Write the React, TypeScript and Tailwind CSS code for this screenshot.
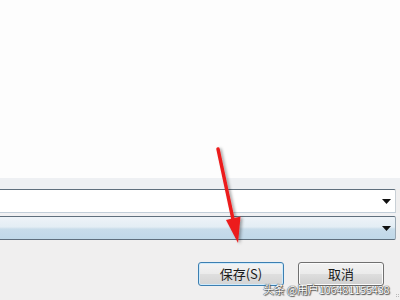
import React from "react";

const font = { fontFamily: '"Microsoft YaHei", "Noto Sans CJK SC", "Liberation Sans", sans-serif' };

function Caret() {
  return (
    <svg width="9" height="5" viewBox="0 0 9 5" className="shrink-0">
      <polygon points="0,0 9,0 4.5,5" fill="#111" />
    </svg>
  );
}

export default function App() {
  return (
    <div className="relative w-[400px] h-[300px] overflow-hidden bg-[#f0efef] flex flex-col" style={font}>
      <div className="h-[178px] bg-[#fdfdfd] shrink-0" />
      <div className="h-[11px] bg-[#eef0f3] shrink-0" />
      <div className="h-[24px] mr-[4px] bg-white border-t border-t-[#5f6f7d] border-b border-b-[#c2ced9] border-r border-r-[#c9d0d6] rounded-tr-[2px] flex items-center justify-end pr-[4px] shrink-0">
        <Caret />
      </div>
      <div className="h-[3px] bg-[#f1f1f3] shrink-0" />
      <div className="h-[24px] mr-[4px] border-t border-t-[#5f6f7d] border-b border-b-[#5f6f7d] border-r border-r-[#9aa8b4] rounded-r-[2px] flex items-center justify-end pr-[4px] shrink-0 bg-[linear-gradient(to_bottom,#eef3f8_0%,#e3edf4_45%,#c8dcea_55%,#c0d8e8_100%)]">
        <Caret />
      </div>
      <div className="flex mt-[22px] shrink-0">
        <div className="ml-[198px] w-[86px] h-[24px] rounded-[3px] border border-[#3c7fb1] shadow-[inset_0_0_0_1px_#cfeafb] bg-[linear-gradient(to_bottom,#f4f4f4_0%,#ebebeb_48%,#dedede_52%,#d4d4d4_100%)] flex items-center justify-center text-[13px] text-[#1a1a1a]">
          保存(S)
        </div>
        <div className="ml-[14px] w-[86px] h-[24px] rounded-[3px] border border-[#707070] shadow-[inset_0_0_0_1px_#fbfbfb] bg-[linear-gradient(to_bottom,#f2f2f2_0%,#ebebeb_48%,#dddddd_52%,#cfcfcf_100%)] flex items-center justify-center text-[13px] text-[#1a1a1a]">
          取消
        </div>
      </div>

      <div
        className="absolute left-[263px] top-[283px] text-[11px] leading-[13px] tracking-[-0.2px] text-white whitespace-nowrap"
        style={{ textShadow: "0 0 1px #333, 0 0 1px #333, 1px 1px 1px #555" }}
      >
        头条 @用户106481155438
      </div>

      <div className="absolute right-[1px] bottom-[3px] grid grid-cols-2 gap-[1px]">
        <span className="w-[1px] h-[1px] bg-[#b8b8b8]" />
        <span className="w-[1px] h-[1px] bg-[#b8b8b8]" />
        <span className="w-[1px] h-[1px] bg-[#b8b8b8]" />
        <span className="w-[1px] h-[1px] bg-[#b8b8b8]" />
      </div>

      <svg className="absolute left-0 top-0 pointer-events-none" width="400" height="300" viewBox="0 0 400 300">
        <defs>
          <filter id="sh" x="-50%" y="-50%" width="200%" height="200%">
            <feDropShadow dx="2" dy="1" stdDeviation="1.5" floodColor="#000" floodOpacity="0.35" />
          </filter>
        </defs>
        <g filter="url(#sh)">
          <line x1="218" y1="149" x2="234" y2="224" stroke="#ec1b1b" strokeWidth="3.5" strokeLinecap="round" />
          <polygon points="226,220 240.5,216.5 238,243" fill="#ec1b1b" />
        </g>
      </svg>
    </div>
  );
}
